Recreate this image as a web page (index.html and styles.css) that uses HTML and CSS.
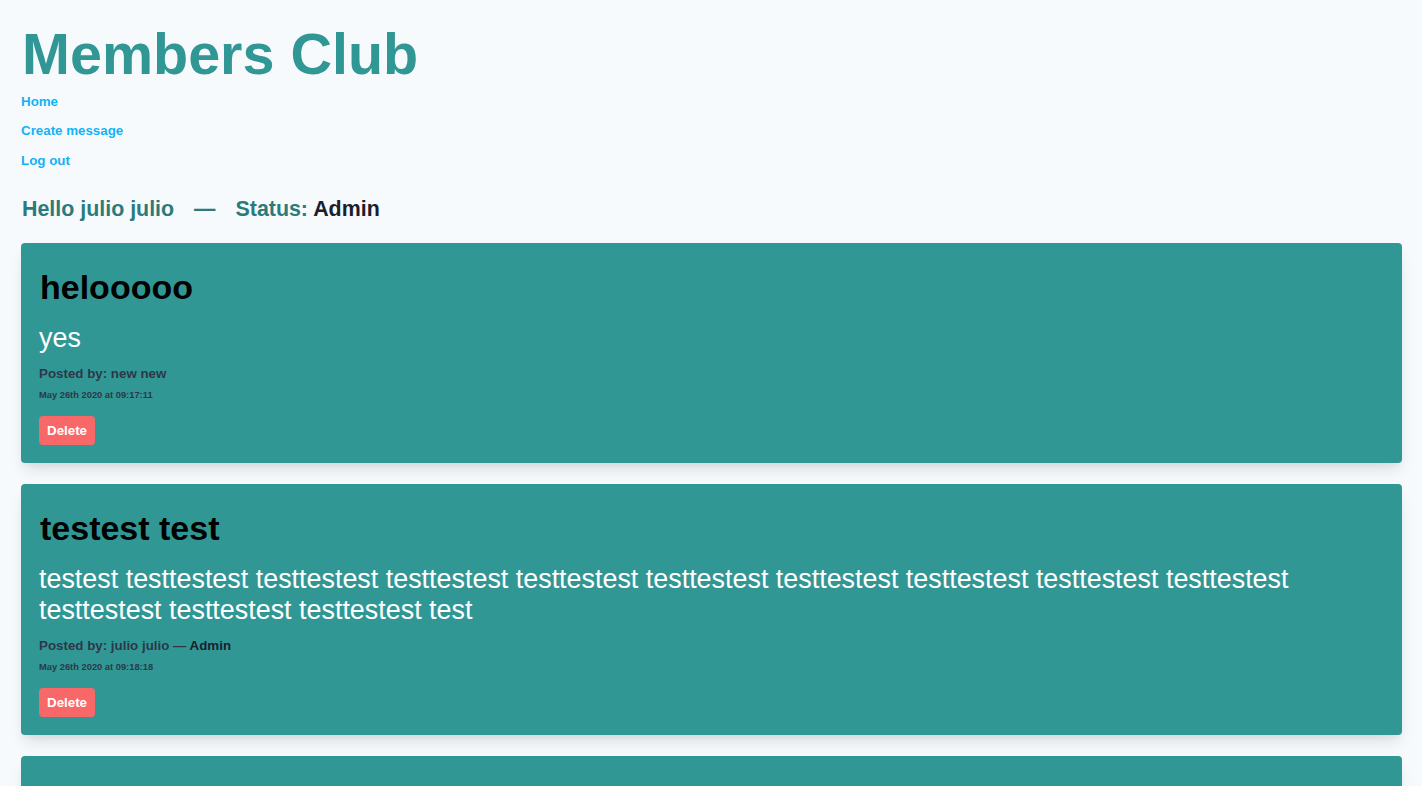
FILE: index.html
```html
<!DOCTYPE html>
<html lang="en">
<head>
<meta charset="utf-8">
<title>Members Club</title>
<link rel="stylesheet" href="styles.css">
</head>
<body>
<div class="page">
  <h1 class="title">Members Club</h1>
  <nav class="nav">
    <a href="#" class="nav-link">Home</a>
    <a href="#" class="nav-link">Create message</a>
    <a href="#" class="nav-link">Log out</a>
  </nav>
  <h2 class="hello">Hello julio julio<span class="dash">—</span>Status: <span class="status">Admin</span></h2>
  <div class="messages">
    <div class="card">
      <h3 class="card-title">helooooo</h3>
      <p class="card-body">yes</p>
      <p class="posted">Posted by: new new</p>
      <p class="date">May 26th 2020 at 09:17:11</p>
      <button class="delete">Delete</button>
    </div>
    <div class="card">
      <h3 class="card-title">testest test</h3>
      <p class="card-body">testest testtestest testtestest testtestest testtestest testtestest testtestest testtestest testtestest testtestest testtestest testtestest testtestest test</p>
      <p class="posted">Posted by: julio julio — <span class="role">Admin</span></p>
      <p class="date">May 26th 2020 at 09:18:18</p>
      <button class="delete">Delete</button>
    </div>
    <div class="card">
      <h3 class="card-title">another message</h3>
      <p class="card-body">hello</p>
      <p class="posted">Posted by: julio julio</p>
      <p class="date">May 26th 2020 at 09:20:00</p>
      <button class="delete">Delete</button>
    </div>
  </div>
</div>
</body>
</html>
```

FILE: styles.css
```css
* { box-sizing: border-box; }
html, body {
  margin: 0;
  padding: 0;
  background: #f7fafc;
  font-family: "Liberation Sans", Arial, sans-serif;
}
.page {
  padding: 0 20px 0 21px;
}
.title {
  margin: 24px 0 0 1px;
  font-size: 57.5px;
  line-height: 60px;
  font-weight: 700;
  color: #319795;
}
.nav {
  display: flex;
  flex-direction: column;
  align-items: flex-start;
  margin-top: 2.5px;
}
.nav-link {
  font-size: 13.33px;
  line-height: 29.5px;
  font-weight: 700;
  color: #12b3f6;
  text-decoration: none;
}
.hello {
  margin: 18.5px 0 0 1px;
  font-size: 21.4px;
  line-height: 30px;
  font-weight: 700;
  color: #2c7a7b;
}
.dash {
  margin: 0 20px;
}
.status {
  color: #1a202c;
}
.messages {
  display: flex;
  flex-direction: column;
  gap: 21px;
  margin-top: 19.5px;
  padding-bottom: 20px;
}
.card {
  background: #319795;
  border-radius: 4px;
  padding: 24px 18px 18px 18px;
  box-shadow: 0 10px 15px -3px rgba(0,0,0,0.1), 0 4px 6px -2px rgba(0,0,0,0.05);
}
.card-title {
  margin: 0 0 0 1px;
  font-size: 34px;
  line-height: 40px;
  font-weight: 700;
  color: #000;
}
.card-body {
  margin: 16px 0 0 0;
  font-size: 26.9px;
  line-height: 31.6px;
  color: #fff;
}
.posted {
  margin: 9.2px 0 0 0;
  font-size: 13.33px;
  line-height: 20px;
  font-weight: 700;
  color: #2d3748;
}
.role {
  color: #1a202c;
}
.date {
  margin: 4px 0 0 0;
  font-size: 9.33px;
  line-height: 14px;
  font-weight: 700;
  color: #2d3748;
}
.delete {
  display: block;
  margin-top: 14px;
  height: 29px;
  padding: 0 8px;
  border: none;
  border-radius: 4px;
  background: #f86868;
  color: #fff;
  font-family: "Liberation Sans", Arial, sans-serif;
  font-size: 13.33px;
  font-weight: 700;
}
```
